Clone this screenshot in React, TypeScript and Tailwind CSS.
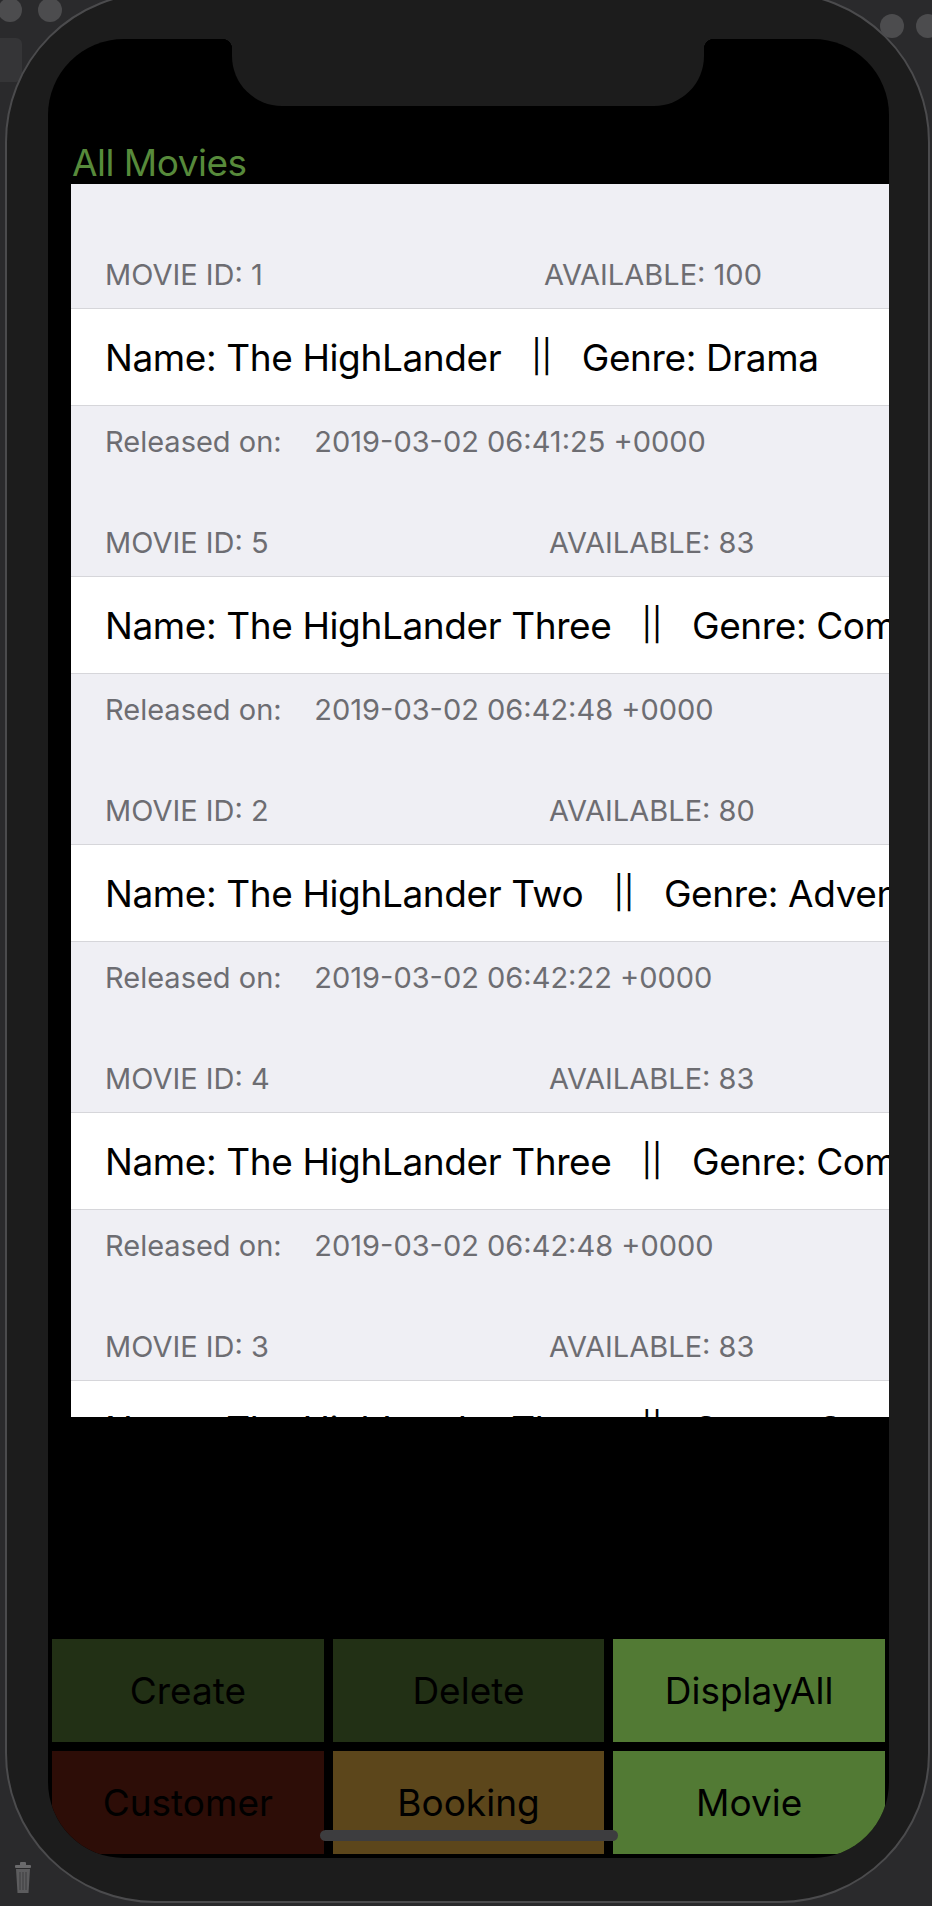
import React from "react";

type Movie = {
  id: number;
  available: number;
  name: string;
  genre: string;
  released: string;
  availClass: string;
};

const movies: Movie[] = [
  { id: 1, available: 100, name: "The HighLander", genre: "Drama", released: "2019-03-02 06:41:25 +0000", availClass: "w-[439px]" },
  { id: 5, available: 83, name: "The HighLander Three", genre: "Comedy", released: "2019-03-02 06:42:48 +0000", availClass: "w-[444px]" },
  { id: 2, available: 80, name: "The HighLander Two", genre: "Adventure", released: "2019-03-02 06:42:22 +0000", availClass: "w-[444px]" },
  { id: 4, available: 83, name: "The HighLander Three", genre: "Comedy", released: "2019-03-02 06:42:48 +0000", availClass: "w-[444px]" },
  { id: 3, available: 83, name: "The HighLander Three", genre: "Comedy", released: "2019-03-02 06:42:48 +0000", availClass: "w-[444px]" },
];

const buttons = [
  { label: "Create", className: "bg-[#223015]" },
  { label: "Delete", className: "bg-[#223015]" },
  { label: "DisplayAll", className: "bg-[#527a34]" },
  { label: "Customer", className: "bg-[#2d0d07]" },
  { label: "Booking", className: "bg-[#5c461b]" },
  { label: "Movie", className: "bg-[#527a34]" },
];

const Section: React.FC<{ movie: Movie; first: boolean }> = ({ movie, first }) => (
  <div>
    <div
      className={
        "flex items-end pb-[19px] pl-[34px] text-[29px] leading-none whitespace-nowrap text-[#6d6d72] " +
        (first ? "h-[124px]" : "h-[106px]")
      }
    >
      <span className={movie.availClass}>MOVIE ID: {movie.id}</span>
      <span>AVAILABLE: {movie.available}</span>
    </div>
    <div className="flex h-[98px] items-center border-y border-[#d6d6da] bg-white pl-[34px] text-[37px] leading-none tracking-[-0.4px] whitespace-pre text-black">
      Name: {movie.name}   <span className="text-[32px]">||</span>   Genre: {movie.genre}
    </div>
    <div className="h-[64px] pt-[21px] pl-[34px] text-[29px] leading-none whitespace-pre text-[#6d6d72]">
      Released on:    {movie.released}
    </div>
  </div>
);

export default function App() {
  return (
    <div
      className="relative h-[1906px] w-[932px] overflow-hidden bg-[#2a2a2c]"
      style={{ fontFamily: 'Inter, "Liberation Sans", sans-serif' }}
    >
      {/* simulator window backdrop */}
      <div className="absolute top-[-2px] left-[-2px] h-[24px] w-[24px] rounded-full bg-[#4c4c4e]" />
      <div className="absolute top-[-2px] left-[38px] h-[24px] w-[24px] rounded-full bg-[#4c4c4e]" />
      <div className="absolute top-[14px] right-[28px] h-[24px] w-[24px] rounded-full bg-[#4c4c4e]" />
      <div className="absolute top-[14px] right-[-8px] h-[24px] w-[24px] rounded-full bg-[#4c4c4e]" />
      <div className="absolute top-[38px] left-[-6px] h-[44px] w-[28px] rounded-[6px] bg-[#353537]" />
      <svg className="absolute bottom-[12px] left-[14px]" width="18" height="32" viewBox="0 0 18 32">
        <rect x="1" y="3" width="16" height="3" rx="1" fill="#6a6a6c" />
        <rect x="6" y="0" width="6" height="4" rx="1" fill="#6a6a6c" />
        <path d="M2 7h14l-1.5 24h-11z" fill="#5c5c5e" />
        <path d="M6 10v18M9 10v18M12 10v18" stroke="#3c3c3e" strokeWidth="1" />
      </svg>

      {/* phone body */}
      <div className="relative mt-[-8px] ml-[5px] h-[1911px] w-[925px] rounded-[150px] border-2 border-[#4b4b4d] bg-[#1c1c1c] pt-[45px] pr-[39px] pb-[43px] pl-[41px]">
        <div className="relative flex h-full flex-col overflow-hidden rounded-[76px] bg-black">
          {/* notch */}
          <div className="absolute top-0 left-[184px] z-10 h-[67px] w-[472px] rounded-b-[50px] bg-[#1c1c1c]">
            <div className="absolute top-0 left-[-10px] h-[10px] w-[10px] bg-[radial-gradient(circle_at_0_100%,transparent_10px,#1c1c1c_10.5px)]" />
            <div className="absolute top-0 right-[-10px] h-[10px] w-[10px] bg-[radial-gradient(circle_at_100%_100%,transparent_10px,#1c1c1c_10.5px)]" />
          </div>

          <div className="pt-[105px] pl-[24px] text-[37px] leading-none tracking-[-0.5px] text-[#578a3b]">All Movies</div>

          <div className="mt-[3px] ml-[23px] h-[1233px] overflow-hidden bg-[#efeff4]">
            {movies.map((m, i) => (
              <Section key={m.id + "-" + i} movie={m} first={i === 0} />
            ))}
          </div>

          <div className="mt-auto grid grid-cols-3 gap-[9px] px-[4px] pb-[4px]">
            {buttons.map((b) => (
              <div
                key={b.label}
                className={"flex h-[103px] items-center justify-center text-[37px] leading-none text-black " + b.className}
              >
                {b.label}
              </div>
            ))}
          </div>

          {/* home indicator */}
          <div className="absolute bottom-[17px] left-1/2 h-[11px] w-[298px] -translate-x-1/2 rounded-full bg-[#3d3d3f]" />
        </div>
      </div>
    </div>
  );
}
